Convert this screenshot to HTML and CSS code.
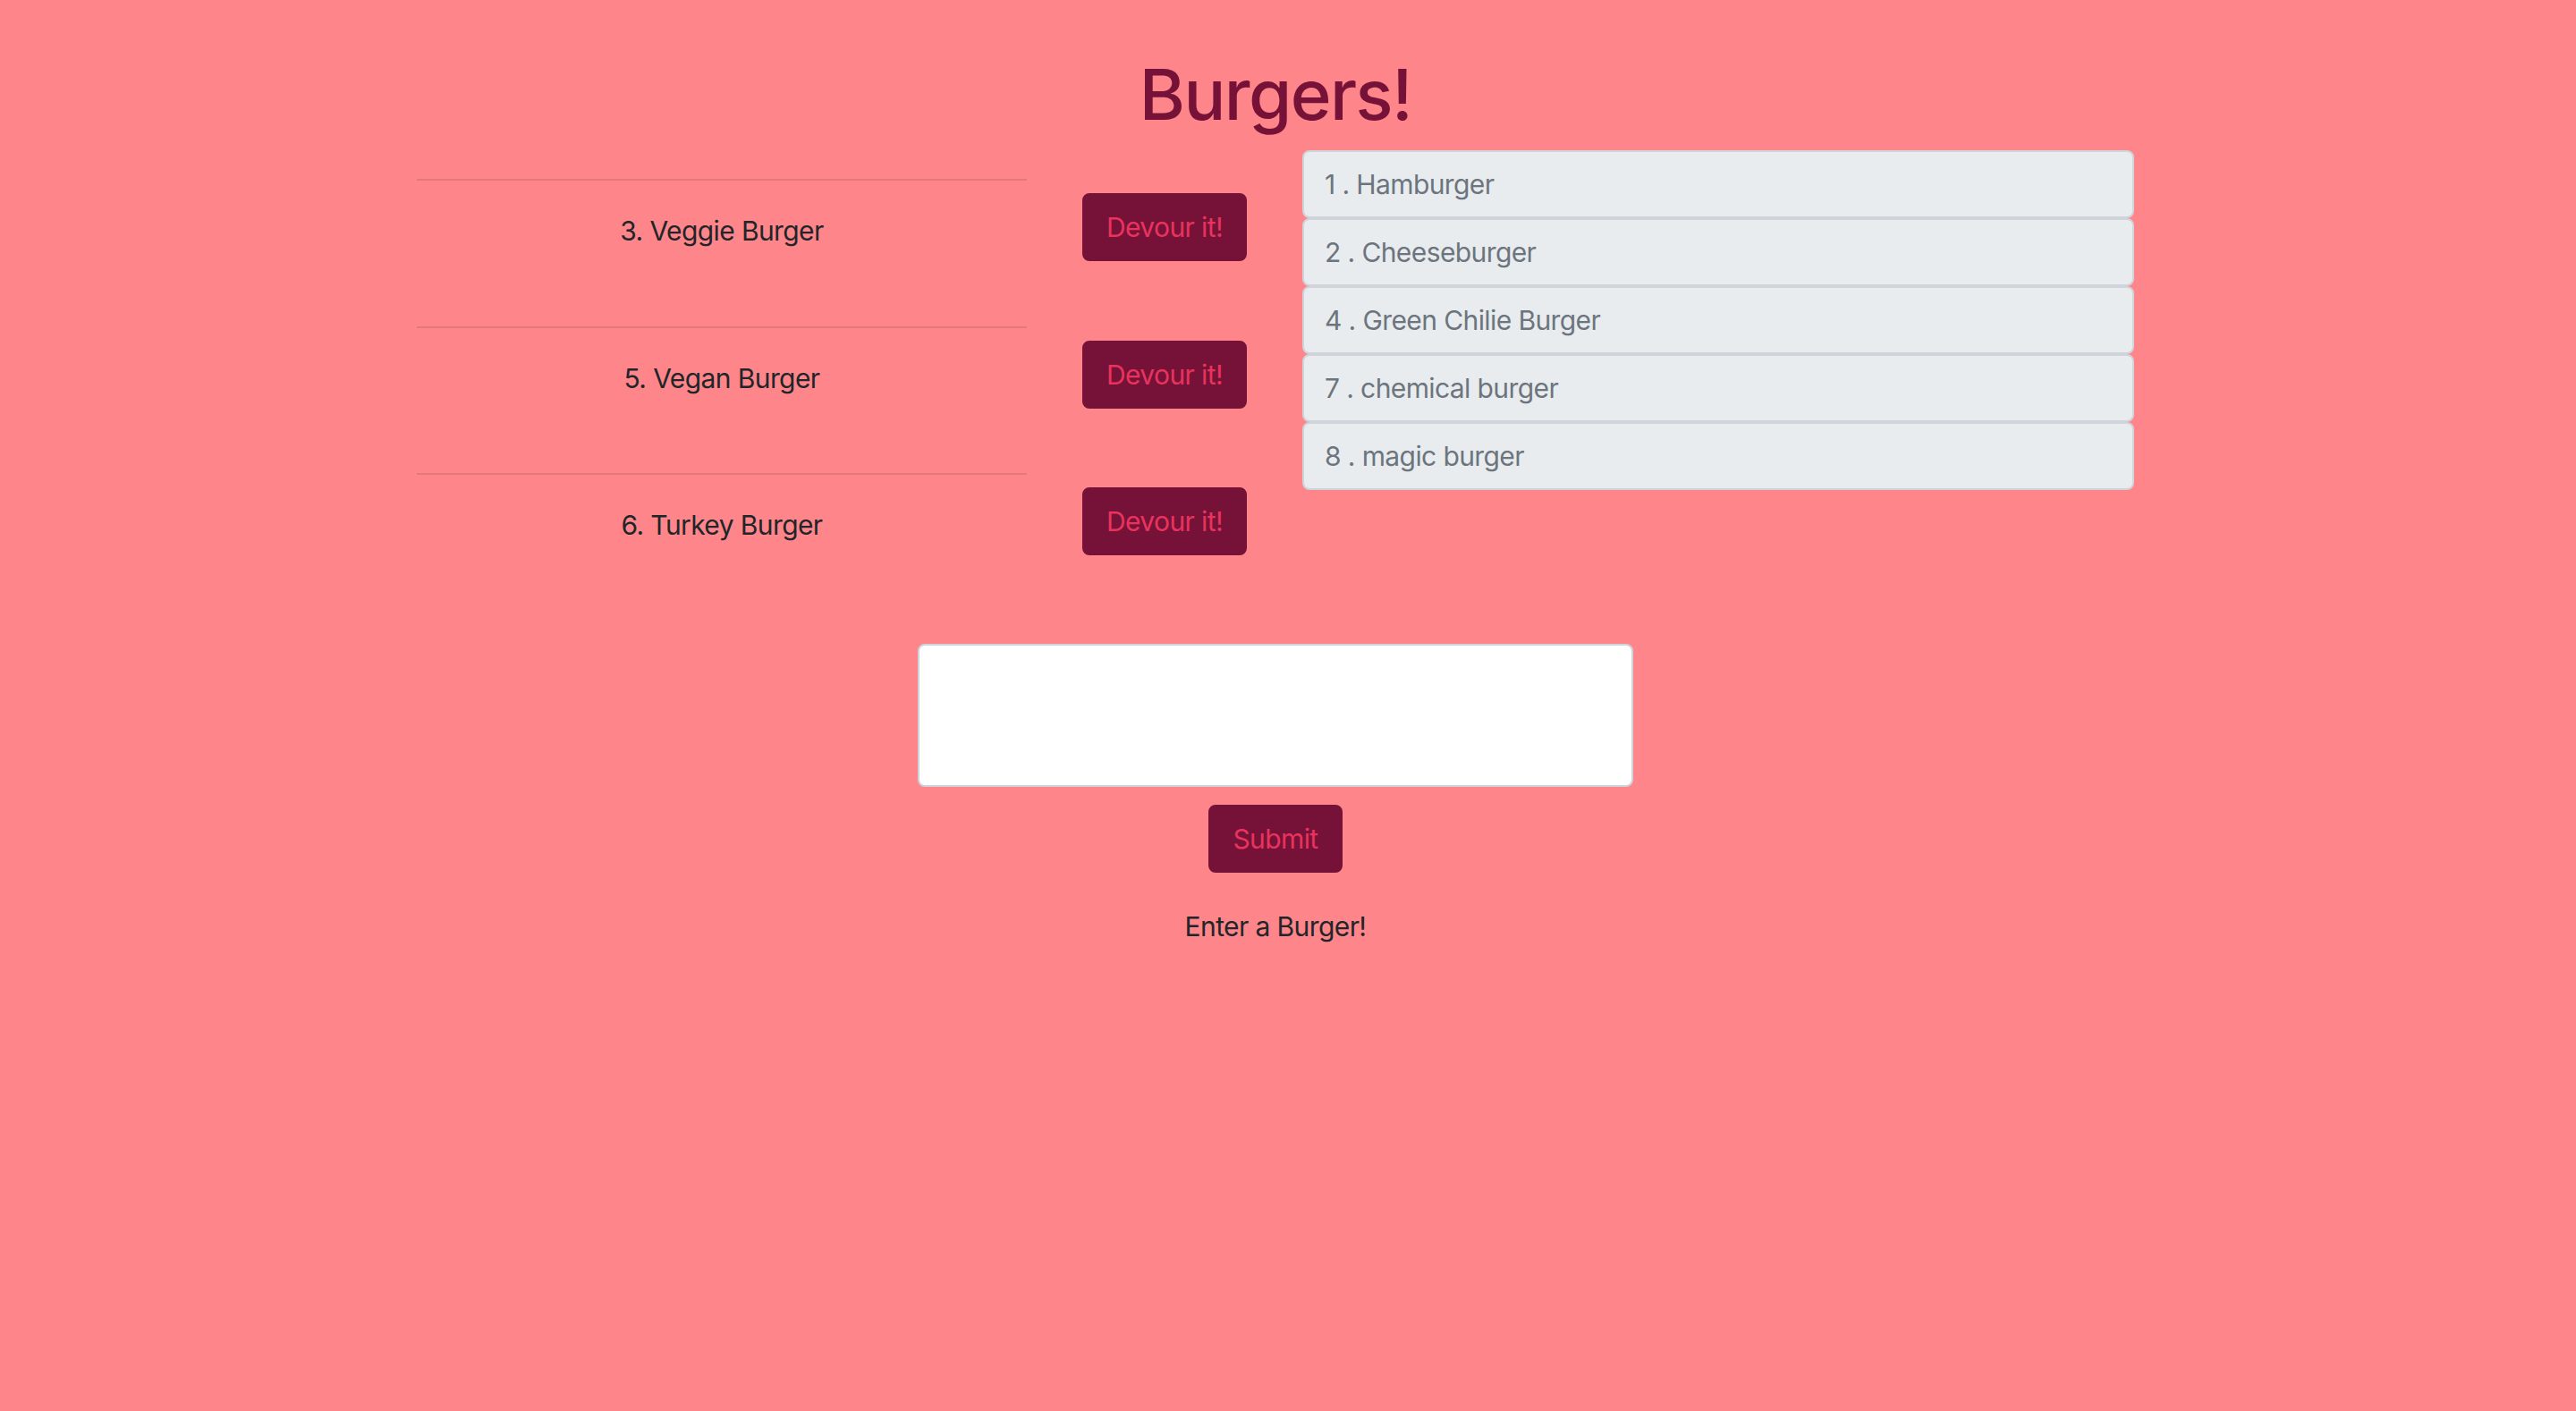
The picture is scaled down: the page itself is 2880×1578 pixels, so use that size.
FILE: index.html
```html
<!DOCTYPE html>
<html lang="en">
<head>
<meta charset="utf-8">
<title>Burgers!</title>
<link rel="stylesheet" href="styles.css">
</head>
<body>
<div class="page">
  <h1 class="title">Burgers!</h1>
  <div class="main">
    <div class="uneaten">
      <div class="burger-row">
        <div class="burger-name">3. Veggie Burger</div>
        <button class="btn">Devour it!</button>
      </div>
      <div class="burger-row">
        <div class="burger-name">5. Vegan Burger</div>
        <button class="btn">Devour it!</button>
      </div>
      <div class="burger-row">
        <div class="burger-name">6. Turkey Burger</div>
        <button class="btn">Devour it!</button>
      </div>
    </div>
    <div class="eaten">
      <div class="eaten-item">1 . Hamburger</div>
      <div class="eaten-item">2 . Cheeseburger</div>
      <div class="eaten-item">4 . Green Chilie Burger</div>
      <div class="eaten-item">7 . chemical burger</div>
      <div class="eaten-item">8 . magic burger</div>
    </div>
  </div>
  <form class="add-form">
    <textarea class="burger-input"></textarea>
    <button type="button" class="btn submit">Submit</button>
    <p class="hint">Enter a Burger!</p>
  </form>
</div>
</body>
</html>
```

FILE: styles.css
```css
html, body {
  margin: 0;
  padding: 0;
  background: #fe868a;
}
body {
  min-height: 1578px;
  font-family: Inter, "Noto Sans", sans-serif;
  font-size: 30px;
  line-height: 48px;
  letter-spacing: -0.02em;
  color: #212529;
}
.page {
  width: 1920px;
  margin-left: calc(50% - 974px);
}
.title {
  margin: 58px 0 14px;
  font-size: 78px;
  line-height: 96px;
  font-weight: 500;
  letter-spacing: -0.02em;
  color: #761237;
  text-align: center;
}
.main {
  display: flex;
  align-items: flex-start;
}
.uneaten {
  padding-top: 32px;
}
.burger-row {
  display: flex;
  align-items: flex-start;
  height: 164.5px;
}
.burger-name {
  width: 682px;
  height: 100%;
  box-sizing: border-box;
  border-top: 2px solid rgba(0, 0, 0, 0.1);
  padding-top: 32px;
  text-align: center;
}
.btn {
  font-family: inherit;
  font-size: 30px;
  line-height: 48px;
  letter-spacing: -0.02em;
  color: #e9335e;
  background: #761237;
  border: 2px solid #761237;
  border-radius: 8px;
  padding: 12px 25px;
  cursor: pointer;
}
.burger-row .btn {
  margin: 16px 0 0 62px;
  width: 184px;
}
.eaten {
  margin-left: 62px;
  width: 930px;
  display: flex;
  flex-direction: column;
}
.eaten-item {
  height: 76px;
  box-sizing: border-box;
  background: #e9ecef;
  border: 2px solid #ced4da;
  border-radius: 8px;
  padding: 12px 23px;
  color: #6c757d;
}
.add-form {
  margin-top: 26px;
  display: flex;
  flex-direction: column;
  align-items: center;
}
.burger-input {
  display: block;
  width: 800px;
  height: 160px;
  box-sizing: border-box;
  margin: 0;
  background: #fff;
  border: 2px solid #ced4da;
  border-radius: 8px;
  resize: none;
  font-family: inherit;
  font-size: 30px;
}
.submit {
  margin-top: 20px;
  width: 150px;
}
.hint {
  margin: 36px 0 0;
  text-align: center;
}
```
